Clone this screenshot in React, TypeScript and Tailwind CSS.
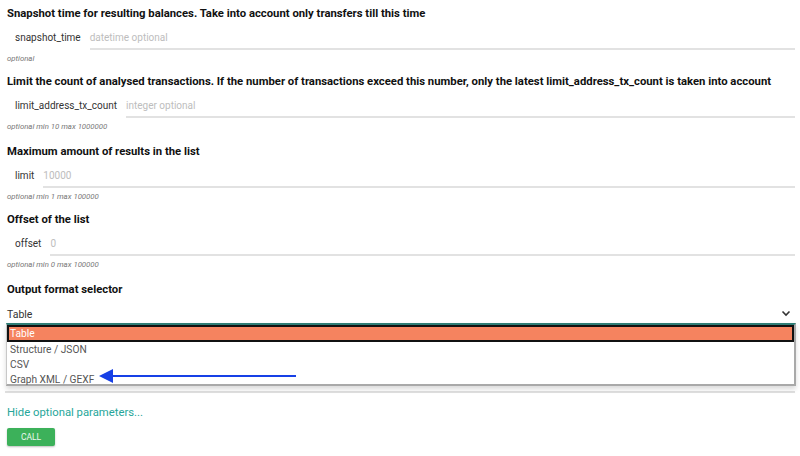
import React from "react";

const font = { fontFamily: "Roboto, 'Liberation Sans', sans-serif" };

function Field({
  heading,
  label,
  placeholder,
  help,
  mt,
}: {
  heading: string;
  label: string;
  placeholder: string;
  help: string;
  mt: string;
}) {
  return (
    <div className={`flex flex-col ${mt}`}>
      <div className="text-[11.3px] leading-[20px] font-bold text-[#111] pl-[7px] whitespace-nowrap">{heading}</div>
      <div className="flex items-end h-[24px] mt-[2px] pl-[15px]">
        <span className="text-[10px] leading-[22px] text-[#333] pr-[9px] self-center">{label}</span>
        <div className="flex-1 h-full border-b-2 border-[#e2e2e2] mr-[5px] flex items-center">
          <span className="text-[10px] text-[#bdbdbd]">{placeholder}</span>
        </div>
      </div>
      <div className="text-[7.8px] leading-[12px] italic text-[#777] pl-[7px] mt-[3px]">{help}</div>
    </div>
  );
}

export default function App() {
  return (
    <div className="relative w-[800px] h-[456px] bg-white overflow-hidden" style={font}>
      <div className="flex flex-col pt-[4px]">
        <Field
          mt="mt-0"
          heading="Snapshot time for resulting balances. Take into account only transfers till this time"
          label="snapshot_time"
          placeholder="datetime optional"
          help="optional"
        />
        <Field
          mt="mt-[7px]"
          heading="Limit the count of analysed transactions. If the number of transactions exceed this number, only the latest limit_address_tx_count is taken into account"
          label="limit_address_tx_count"
          placeholder="integer optional"
          help="optional min 10 max 1000000"
        />
        <Field
          mt="mt-[9px]"
          heading="Maximum amount of results in the list"
          label="limit"
          placeholder="10000"
          help="optional min 1 max 100000"
        />
        <Field
          mt="mt-[7px]"
          heading="Offset of the list"
          label="offset"
          placeholder="0"
          help="optional min 0 max 100000"
        />
        <div className="flex flex-col mt-[9px]">
          <div className="text-[11.3px] leading-[20px] font-bold text-[#111] pl-[7px]">Output format selector</div>
          <div className="mx-[5px] mt-[2px] h-[91px] border-b-2 border-[#e0e0e0]">
            <div className="flex items-center justify-between h-[26px] pl-[2px] pr-[4px]">
              <span className="text-[10.5px] text-[#333]">Table</span>
              <svg width="10" height="7" viewBox="0 0 10 7" className="mt-[-3px]">
                <path d="M1.5 1.5 L5 5 L8.5 1.5" fill="none" stroke="#333" strokeWidth="1.6" />
              </svg>
            </div>
          </div>
        </div>
        <div className="text-[11.3px] leading-[20px] text-[#26a69a] pl-[7px] mt-[10px]">Hide optional parameters...</div>
        <div className="pl-[7px] mt-[5px]">
          <button className="w-[48px] h-[18px] bg-[#3cb15a] text-white/90 text-[8.5px] rounded-[2px] shadow-[0_1px_2px_rgba(0,0,0,0.25)] flex items-center justify-center">
            CALL
          </button>
        </div>
      </div>

      {/* Dropdown list overlay */}
      <div className="absolute left-[6px] top-[323px] w-[790px] h-[63px] bg-white border-t-2 border-t-[#2f7d75] border-r-2 border-r-[#a9a9a9] border-b-2 border-b-[#a9a9a9] border-l border-l-[#c8c8c8] shadow-[0_3px_5px_rgba(0,0,0,0.15)] flex flex-col text-[10.2px] leading-[15px]">
        <div className="h-[17px] bg-[#f5835f] border-2 border-[#111] text-white pl-[1px] flex items-center">Table</div>
        <div className="pl-[3px] text-[#555]">Structure / JSON</div>
        <div className="pl-[3px] text-[#555]">CSV</div>
        <div className="pl-[3px] text-[#555]">Graph XML / GEXF</div>
      </div>

      {/* Annotation arrow */}
      <svg className="absolute left-0 top-0" width="800" height="456">
        <line x1="108" y1="376" x2="296" y2="376" stroke="#1740e6" strokeWidth="2.2" />
        <polygon points="99,376 113,369 113,383" fill="#1740e6" />
      </svg>
    </div>
  );
}
